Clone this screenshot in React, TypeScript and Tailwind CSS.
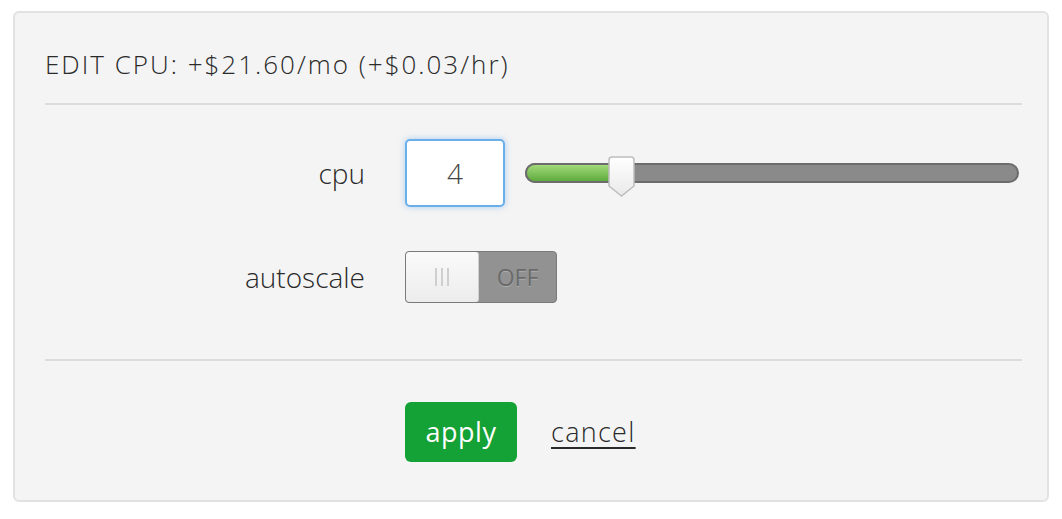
import React from "react";

export default function App() {
  return (
    <div className="w-[1062px] h-[519px] bg-white pt-[11px] pl-[13px]" style={{ fontFamily: '"Open Sans", sans-serif' }}>
      <div className="w-[1036px] h-[491px] rounded-[6px] border-2 border-[#e2e2e2] bg-[#f4f4f4] pl-[30px] pr-[25px]">
        <div className="pt-[36px] pb-[24px] text-[26px] font-light leading-[30px] tracking-[2px] text-[#2a2a2a] whitespace-nowrap">
          EDIT CPU: +$21.60/mo (+$0.03/hr)
        </div>
        <div className="h-[2px] bg-[#dcdcdc]" />
        <div className="pt-[34px] flex flex-col gap-[44px]">
          <div className="flex items-center">
            <div className="w-[320px] text-right text-[28px] font-light text-[#2a2a2a]">cpu</div>
            <div className="ml-[40px] w-[100px] h-[68px] rounded-[5px] border-2 border-[#6aaeea] bg-white shadow-[0_0_6px_rgba(100,170,240,0.5)] flex items-center justify-center text-[28px] font-light text-[#444]">
              4
            </div>
            <div className="ml-[20px] relative w-[494px] h-[20px] shrink-0">
              <div className="absolute inset-0 rounded-full border-2 border-[#6c6c6c] bg-[#8a8a8a]" />
              <div className="absolute left-0 top-0 h-[20px] w-[100px] rounded-l-full border-2 border-r-0 border-[#6c6c6c] bg-gradient-to-b from-[#a2d97a] to-[#5eab3d]" />
              <svg className="absolute left-[83px] top-[-7px]" width="27" height="42" viewBox="0 0 27 42">
                <defs>
                  <linearGradient id="hg" x1="0" y1="0" x2="0" y2="1">
                    <stop offset="0" stopColor="#ffffff" />
                    <stop offset="1" stopColor="#e9e9e9" />
                  </linearGradient>
                </defs>
                <path d="M4 1 H23 Q26 1 26 4 V30 L13.5 40 L1 30 V4 Q1 1 4 1 Z" fill="url(#hg)" stroke="#bdbdbd" strokeWidth="1.5" />
              </svg>
            </div>
          </div>
          <div className="flex items-center">
            <div className="w-[320px] text-right text-[28px] font-light text-[#2a2a2a]">autoscale</div>
            <div className="ml-[40px] w-[152px] h-[52px] rounded-[4px] border border-[#7a7a7a] bg-[#929292] flex overflow-hidden">
              <div className="w-[73px] h-full bg-gradient-to-b from-[#fafafa] to-[#ececec] border-r border-[#d0d0d0] rounded-[3px] flex items-center justify-center gap-[4px]">
                <span className="w-[2px] h-[18px] bg-[#cfcfcf]" />
                <span className="w-[2px] h-[18px] bg-[#cfcfcf]" />
                <span className="w-[2px] h-[18px] bg-[#cfcfcf]" />
              </div>
              <div className="flex-1 flex items-center justify-center text-[23px] text-[#6a6a6a] [text-shadow:0_1px_0_rgba(255,255,255,0.25)]">OFF</div>
            </div>
          </div>
        </div>
        <div className="mt-[56px] h-[2px] bg-[#dcdcdc]" />
        <div className="pt-[41px] flex items-center">
          <div className="ml-[360px] w-[112px] h-[60px] rounded-[6px] bg-[#14a135] text-white text-[27px] tracking-[0.5px] flex items-center justify-center">
            apply
          </div>
          <div className="ml-[34px] text-[27px] font-light text-[#2a2a2a] underline underline-offset-[5px] decoration-[2px] tracking-[1.3px]">cancel</div>
        </div>
      </div>
    </div>
  );
}
